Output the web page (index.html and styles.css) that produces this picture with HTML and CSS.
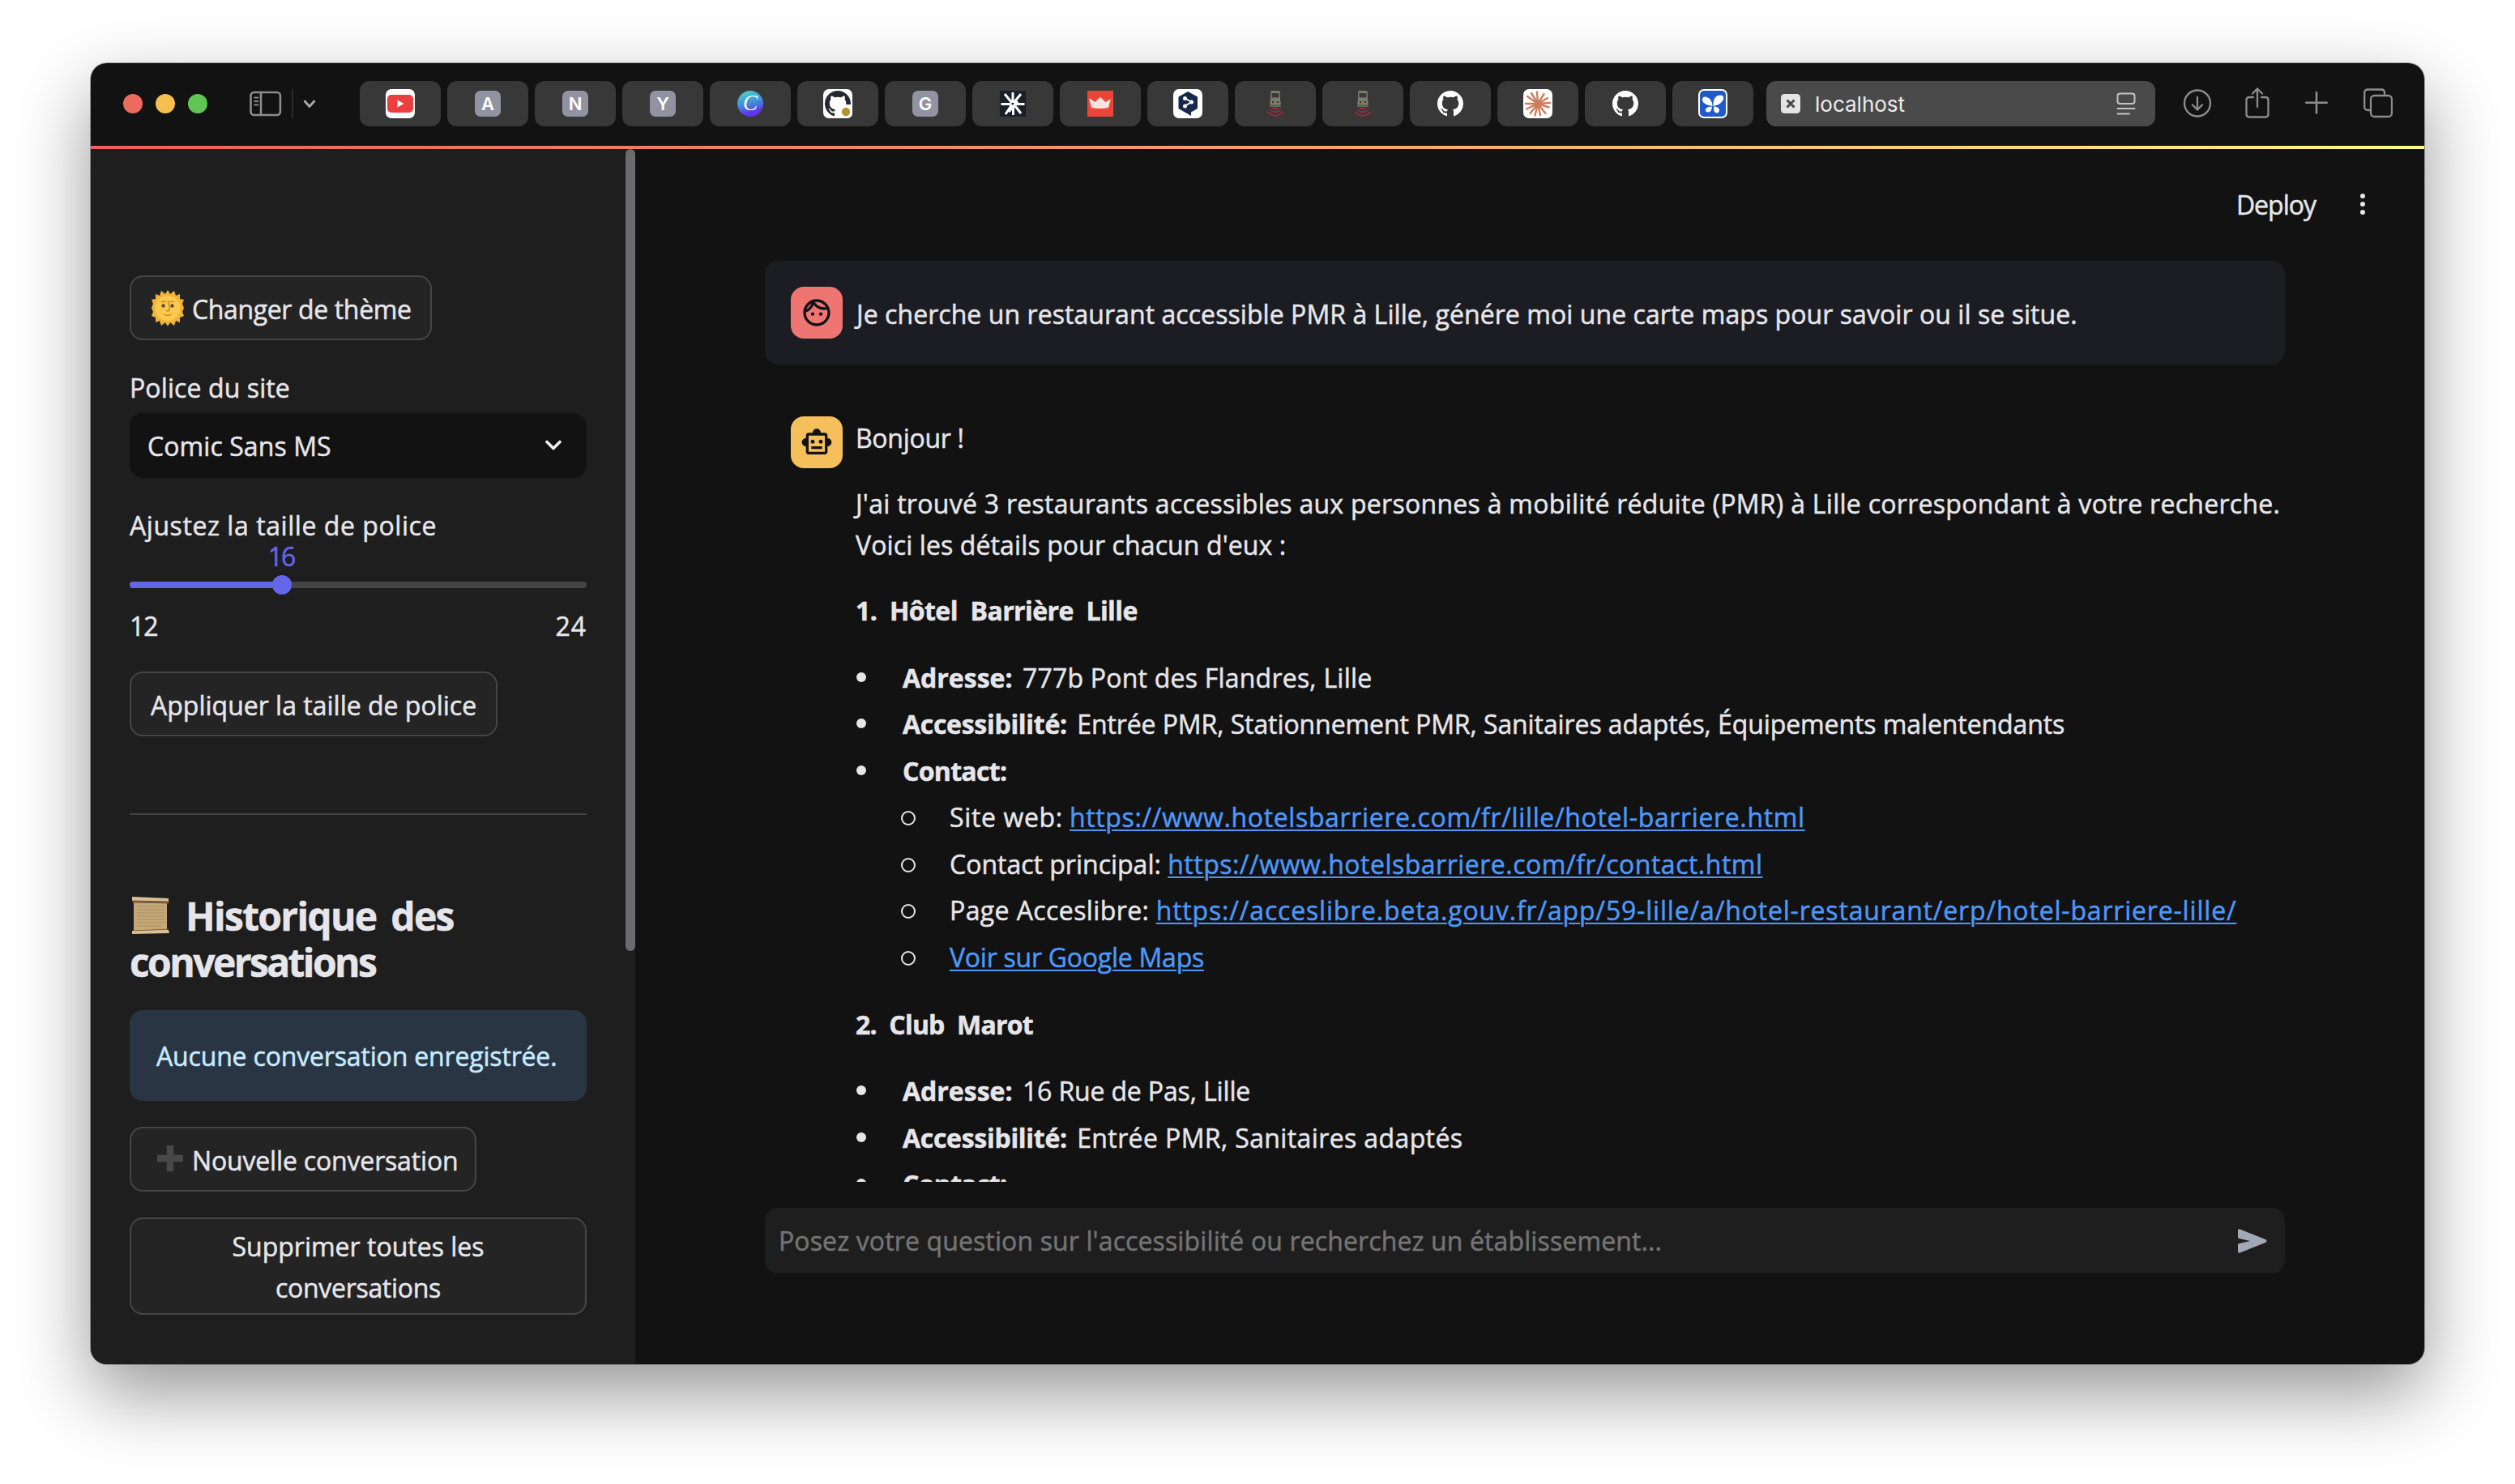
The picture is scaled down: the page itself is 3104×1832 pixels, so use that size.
FILE: index.html
```html
<!DOCTYPE html>
<html lang="fr">
<head>
<meta charset="utf-8">
<title>localhost</title>
<link rel="stylesheet" href="styles.css">
</head>
<body>
<svg class="defs" aria-hidden="true">
  <symbol id="github" viewBox="0 0 16 16"><path d="M8 0C3.58 0 0 3.58 0 8c0 3.54 2.29 6.53 5.47 7.59.4.07.55-.17.55-.38 0-.19-.01-.82-.01-1.49-2.01.37-2.53-.49-2.69-.94-.09-.23-.48-.94-.82-1.13-.28-.15-.68-.52-.01-.53.63-.01 1.08.58 1.23.82.72 1.21 1.87.87 2.33.66.07-.52.28-.87.51-1.07-1.78-.2-3.64-.89-3.64-3.95 0-.87.31-1.59.82-2.15-.08-.2-.36-1.02.08-2.12 0 0 .67-.21 2.2.82.64-.18 1.32-.27 2-.27s1.36.09 2 .27c1.53-1.04 2.2-.82 2.2-.82.44 1.1.16 1.92.08 2.12.51.56.82 1.27.82 2.15 0 3.07-1.87 3.75-3.65 3.95.29.25.54.73.54 1.48 0 1.07-.01 1.93-.01 2.2 0 .21.15.46.55.38A8.01 8.01 0 0 0 16 8c0-4.42-3.58-8-8-8z"/></symbol>
  <symbol id="train" viewBox="0 0 32 32">
    <path d="M11 0h10l1 3v8l1 6H9l1-6V3z" fill="#7b7c6c"/><path d="M11.500 3h9v5.500h-9z" fill="#3c3c3c"/>
    <path d="M12 13h2v2h-2zM18 13h2v2h-2z" fill="#333"/><path d="M10 17h12M9 19.200h14" stroke="#7b7c6c" stroke-width="1.300"/>
    <path d="M12.500 21q3.500 3 7 0M9.500 23.500q6.500 6 13 0M6.500 26q9.500 9.500 19 0" fill="none" stroke="#a32a42" stroke-width="1.700"/>
  </symbol>
</svg>

<div class="window">
  <header class="toolbar">
    <div class="lights"><i class="red"></i><i class="yellow"></i><i class="green"></i></div>
    <svg class="panel" viewBox="0 0 40 32" fill="none" stroke="#8d8d8d" stroke-width="2.600" stroke-linecap="round"><rect x="1.500" y="2" width="36.400" height="28" rx="4"/><path d="M14 2v28"/><path d="M6.300 8.500h4M6.300 13h4M6.300 17.500h4" stroke-width="2"/></svg>
    <span class="divider"></span>
    <svg class="caret" viewBox="0 0 16 10" fill="none" stroke="#a9a9a9" stroke-width="2.800" stroke-linecap="round" stroke-linejoin="round"><path d="M2.200 1.500 8 8l5.800-6.500"/></svg>
    <nav class="tabs">
      <span class="tab"><svg class="fav big" viewBox="0 0 36 36"><rect width="36" height="36" rx="7" fill="#fff"/><rect x="2" y="7" width="32" height="22" rx="5" fill="#ea3f3e"/><path d="M14.500 13.500v9l8-4.500z" fill="#fff"/></svg></span>
      <span class="tab"><b class="letter">A</b></span>
      <span class="tab"><b class="letter">N</b></span>
      <span class="tab"><b class="letter">Y</b></span>
      <span class="tab"><b class="letter canva">C</b></span>
      <span class="tab"><svg class="fav big" viewBox="0 0 36 36"><rect width="36" height="36" rx="7" fill="#fff"/><use href="#github" x="2" y="2" width="32" height="32" fill="#24292f"/><path d="M18 36V27l4-8h14v10q0 7-7 7z" fill="#fff"/><circle cx="28" cy="28" r="5.200" fill="#b8932f"/></svg></span>
      <span class="tab"><b class="letter">G</b></span>
      <span class="tab"><svg class="fav" viewBox="0 0 32 32"><path fill="#1a2029" d="M0 0h32v32H0z"/><path d="M16 2v13M6 4l9 11M26 4l-9 11M1.500 16.500H14M18 16.500h12.500M7 29l8-12M26 28l-7-9M16.500 20v10M11 26 22 13" stroke="#fff" stroke-width="3"/></svg></span>
      <span class="tab"><svg class="fav" viewBox="0 0 32 32"><path fill="#eb4538" d="M0 0h32v32H0z"/><path fill="#fff" d="M5 21 2 9l7.500 5L16 8l6.500 6L29 10l-3 11q-10 2-21 0z" opacity=".85"/></svg></span>
      <span class="tab"><svg class="fav big" viewBox="0 0 36 36"><rect width="36" height="36" rx="7" fill="#fff"/><path d="M18 3 30 9.500v14.500L22 28.500V33l-6-3.500L6.500 24V9.500z" fill="#17294a"/><path d="M14 11l8.500 5L14 21" fill="none" stroke="#fff" stroke-width="1.800"/><g fill="#fff"><circle cx="14.500" cy="11.500" r="2.500"/><circle cx="22.500" cy="16" r="2.500"/><circle cx="14.500" cy="21" r="2.500"/></g></svg></span>
      <span class="tab"><svg class="fav"><use href="#train"/></svg></span>
      <span class="tab"><svg class="fav"><use href="#train"/></svg></span>
      <span class="tab"><svg class="fav" fill="#fff"><use href="#github"/></svg></span>
      <span class="tab"><svg class="fav big" viewBox="0 0 36 36"><rect width="36" height="36" rx="7" fill="#fff"/><path d="M18 18 17 3.500M18 18l7.500-12M18 18l12-7M18 18l15-1M18 18l13.500 4.500M18 18l9.500 12M18 18l3 14M18 18l-3.500 14.500M18 18 8.500 30M18 18 4 24.500M18 18 3 18M18 18 5 9M18 18 10 5" stroke="#cd7c5c" stroke-width="2.400" stroke-linecap="round"/></svg></span>
      <span class="tab"><svg class="fav" fill="#fff"><use href="#github"/></svg></span>
      <span class="tab"><svg class="fav big" viewBox="0 0 36 36"><rect width="36" height="36" rx="7" fill="#fff"/><rect x="2" y="2" width="32" height="32" rx="5" fill="#2158cc"/><path fill="#fff" d="M17.500 21Q5 19 5 13q0-4 4-3.500Q17 11 17.500 21zM18.500 21Q18 8 27 7.500q5 0 4 5Q29 19 18.500 21zM17 21.500q-1 8-5.500 7t-1.500-5q2-2 7-2zM19 21.500q6 0 7 4 0 4-3.500 4-4-.5-3.500-8z"/></svg></span>
    </nav>
    <div class="address">
      <svg class="site" viewBox="0 0 24 24"><rect width="24" height="24" rx="4.500" fill="#e4e4e4"/><path d="M7.500 7.500l9 9M16.500 7.500l-9 9" stroke="#4a4a4a" stroke-width="3"/></svg>
      <span class="host">localhost</span>
      <svg class="reader" viewBox="0 0 24 28" fill="none" stroke="#c4c4c4" stroke-width="2" stroke-linecap="round"><rect x="1.500" y="1.500" width="21" height="12.500" rx="3"/><path d="M1.500 20h21M1.500 26.500h14.500"/></svg>
    </div>
    <svg class="act" viewBox="0 0 36 40" fill="none" stroke="#8d8d8d" stroke-width="2.300" stroke-linecap="round" stroke-linejoin="round"><circle cx="18" cy="19.500" r="16"/><path d="M18 12v15M12 21.500l6 6 6-6"/></svg>
    <svg class="act share" viewBox="0 0 36 40" fill="none" stroke="#8d8d8d" stroke-width="2.300" stroke-linecap="round" stroke-linejoin="round"><path d="M13 12H8q-3.500 0-3.500 3.500v17.500Q4.500 36.500 8 36.500h20q3.500 0 3.500-3.500V15.500Q31.500 12 28 12h-5M18 24V1.500M12 7.500l6-6 6 6"/></svg>
    <svg class="act plus" viewBox="0 0 36 40" fill="none" stroke="#8d8d8d" stroke-width="2.600" stroke-linecap="round"><path d="M18 6v25.500M5.200 18.700h25.500"/></svg>
    <svg class="act stack" viewBox="0 0 36 40" fill="none" stroke="#8d8d8d" stroke-width="2.300"><path d="M9 28H5.500Q1.200 28 1.200 24V6.500Q1.200 2.500 5.500 2.500H22q4 0 4 4V10"/><rect x="9" y="10" width="26" height="26" rx="4.500"/></svg>
  </header>

  <div class="app">
    <aside class="sidebar">
      <div class="side-content">
        <button class="btn theme"><svg class="sun" viewBox="0 0 40 44"><path d="M20 0l3 5 5-4 2 6 5-2 0 6 5 1-2 5 2 5-2 5 2 5-5 2 0 6-5-2-2 6-5-4-3 5-3-5-5 4-2-6-5 2 0-6-5-2 2-5-2-5 2-5-2-5 5-1 0-6 5 2 2-6 5 4z" fill="#f2b33a"/><circle cx="20" cy="22.500" r="15.500" fill="#fbc94c"/><path d="M20 13q3 8 2 12-2 2-4 0M12 15q3-2 5.500 0M22.500 15q3-2 5.500 0M15.500 30q4.500 3 9 0" fill="none" stroke="#c98a25" stroke-width="1.500"/><circle cx="14.500" cy="19.500" r="2.200" fill="#54503a"/><circle cx="25.500" cy="19.500" r="2.200" fill="#54503a"/></svg><span class="t-theme">Changer de thème</span></button>

        <label class="label t-font">Police du site</label>
        <div class="select"><span class="t-comic">Comic Sans MS</span><svg class="down" viewBox="0 0 20 13" fill="none" stroke="#f0f0f0" stroke-width="3.600" stroke-linecap="round" stroke-linejoin="round"><path d="M2 2.500l8 8 8-8"/></svg></div>

        <label class="label size-label t-size">Ajustez la taille de police</label>
        <div class="slider">
          <div class="value-row"><span class="value">16</span></div>
          <div class="track"><span class="fill"></span><span class="thumb"></span></div>
          <div class="ticks"><span class="min">12</span><span class="max">24</span></div>
        </div>
        <button class="btn">Appliquer la taille de police</button>
        <hr>
        <h2><svg class="scroll" viewBox="0 0 48 48"><path d="M3 4h41v40H3z" fill="#c6a878"/><path d="M1 1l45 2v4L1 6zM1 43l45-1 1 4-46 1z" fill="#dcc094"/><path d="M1 6l45 1v2L3 8zM3 43l43-2" fill="#6e5636" stroke="#7a6140"/><path d="M7 13h34M7 17h34M7 21h34M7 25h34M7 29h34M7 33h34M7 37h30" stroke="#a98d60" stroke-width="1.200"/></svg><span class="t-hist">Historique des</span><br><span class="t-conv-h">conversations</span></h2>
        <div class="alert t-none">Aucune conversation enregistrée.</div>
        <button class="btn new"><svg class="add" viewBox="0 0 30 30"><path d="M11 0h8v11h11v8H19v11h-8V19H0v-8h11z" fill="#484848"/></svg><span class="t-new">Nouvelle conversation</span></button>
        <button class="btn wide"><span>Supprimer toutes les</span><span class="t-conv">conversations</span></button>
      </div>
      <div class="scrollbar"></div>
    </aside>

    <main class="main">
      <div class="topbar"><span class="deploy">Deploy</span><span class="kebab"><i></i><i></i><i></i></span></div>
      <div class="thread">
        <section class="msg user">
          <div class="avatar"><svg viewBox="0 0 24 24"><path d="M10.250 13c0 .69-.56 1.250-1.250 1.250S7.750 13.690 7.750 13s.56-1.250 1.250-1.250 1.250.56 1.250 1.250zM15 11.750c-.69 0-1.250.56-1.250 1.250s.56 1.250 1.250 1.250 1.250-.56 1.250-1.250-.56-1.250-1.250-1.250zm7 .25c0 5.520-4.480 10-10 10S2 17.520 2 12 6.480 2 12 2s10 4.480 10 10zM10.660 4.120C12.060 6.440 14.600 8 17.500 8c.46 0 .91-.05 1.340-.12C17.440 5.560 14.900 4 12 4c-.46 0-.91.05-1.340.12zM4.420 9.470c1.710-.97 3.030-2.550 3.660-4.440C6.370 6 5.050 7.580 4.420 9.470zM20 12c0-.78-.12-1.530-.33-2.240-.7.150-1.420.24-2.170.24-3.130 0-5.920-1.440-7.760-3.690C8.690 8.870 6.600 10.880 4 11.860c.01.04 0 .09 0 .14 0 4.410 3.590 8 8 8s8-3.590 8-8z"/></svg></div>
          <p class="t-query">Je cherche un restaurant accessible PMR à Lille, génére moi une carte maps pour savoir ou il se situe.</p>
        </section>
        <section class="msg bot">
          <div class="avatar"><svg viewBox="0 0 24 24"><path d="M20 9V7c0-1.100-.9-2-2-2h-3c0-1.660-1.340-3-3-3S9 3.340 9 5H6c-1.100 0-2 .9-2 2v2c-1.660 0-3 1.340-3 3s1.340 3 3 3v4c0 1.100.9 2 2 2h12c1.100 0 2-.9 2-2v-4c1.660 0 3-1.340 3-3s-1.340-3-3-3zm-2 10H6V7h12v12zm-9-6c-.83 0-1.500-.67-1.500-1.500S8.170 10 9 10s1.500.67 1.500 1.500S9.830 13 9 13zm7.500-1.500c0 .83-.67 1.500-1.500 1.500s-1.500-.67-1.500-1.500.67-1.500 1.500-1.500 1.500.67 1.500 1.500zM8 15h8v2H8v-2z"/></svg></div>
          <div class="prose">
            <p class="t-hello">Bonjour !</p>
            <p><span class="t-found">J'ai trouvé 3 restaurants accessibles aux personnes à mobilité réduite (PMR) à Lille correspondant à votre recherche.</span><br><span class="t-details">Voici les détails pour chacun d'eux :</span></p>
            <p><strong class="t-place">1. Hôtel Barrière Lille</strong></p>
            <ul>
              <li><div><strong>Adresse:</strong> <span class="t-777">777b Pont des Flandres, Lille</span></div></li>
              <li><div><strong class="t-acc">Accessibilité:</strong> <span class="t-entry">Entrée PMR, Stationnement PMR, Sanitaires adaptés, Équipements malentendants</span></div></li>
              <li><div><strong class="t-contact">Contact:</strong>
                <ul class="inner">
                  <li><div><span class="t-web">Site web:</span> <a href="#" class="t-web">https://www.hotelsbarriere.com/fr/lille/hotel-barriere.html</a></div></li>
                  <li><div><span>Contact principal:</span> <a href="#" class="t-page">https://www.hotelsbarriere.com/fr/contact.html</a></div></li>
                  <li><div><span class="t-acceslibre">Page Acceslibre:</span> <a href="#" class="t-long">https://acceslibre.beta.gouv.fr/app/59-lille/a/hotel-restaurant/erp/hotel-barriere-lille/</a></div></li>
                  <li><div><a href="#" class="t-maps">Voir sur Google Maps</a></div></li>
                </ul></div></li>
            </ul>
            <p><strong class="t-place club">2. Club Marot</strong></p>
            <ul>
              <li><div><strong>Adresse:</strong> <span class="t-rue">16 Rue de Pas, Lille</span></div></li>
              <li><div><strong class="t-acc">Accessibilité:</strong> <span class="t-short">Entrée PMR, Sanitaires adaptés</span></div></li>
              <li><div><strong class="t-contact">Contact:</strong></div></li>
            </ul>
          </div>
        </section>
      </div>
      <div class="composer"><span class="t-ask">Posez votre question sur l'accessibilité ou recherchez un établissement...</span><svg class="send" viewBox="0 0 36 30"><path d="M0 2Q0-.5 2.500.5L34 13q3 2 0 4L2.500 29.500Q0 30.500 0 28v-8.500q0-1 1-1.300L15 15 1 11.800q-1-.3-1-1.300z" fill="#a3a8b8"/></svg></div>
    </main>
  </div>
</div>
</body>
</html>
```
FILE: styles.css
```css
* { box-sizing: border-box; }
body {
  margin: 0;
  width: 3104px;
  height: 1832px;
  overflow: hidden;
  padding: 78px 112px;
  background: #fff;
  color: #e6e6ea;
  font: 400 32px/51px "Open Sans", "Noto Sans", sans-serif;
}
.defs { position: absolute; width: 0; height: 0; }
.window {
  width: 2880px;
  height: 1606px;
  border-radius: 20px;
  overflow: hidden;
  background: #121212;
  box-shadow: 0 0 0 1px rgba(0,0,0,.3), 0 36px 92px rgba(0,0,0,.42);
}

/* browser toolbar */
.toolbar { display: flex; align-items: center; height: 102px; padding: 0 36px 2px 40px; }
.lights { display: flex; gap: 16px; margin-right: 52px; }
.lights i { width: 24px; height: 24px; border-radius: 50%; }
.red { background: #ec6a5e; }
.yellow { background: #f5bf4f; }
.green { background: #61c554; }
.panel { width: 40px; height: 32px; }
.divider { width: 2px; height: 36px; margin: 0 12px 0 12px; background: #2b2b2b; }
.caret { width: 16px; height: 11px; margin-right: 54px; }
.tabs { display: flex; gap: 8px; margin-right: 16px; }
.tab { display: flex; align-items: center; justify-content: center; width: 100px; height: 56px; border-radius: 12px; background: #383838; }
.fav { width: 32px; height: 32px; }
.fav.big { width: 36px; height: 36px; }
.letter { width: 32px; height: 32px; border-radius: 7px; background: #9293a0; color: #fff; font: 600 22px/32px Inter, sans-serif; text-align: center; }
.canva { border-radius: 50%; background: linear-gradient(165deg, #4fd0c4 5%, #3f95d8 45%, #5a35ee 80%, #7d2ae8); font: italic 400 27px/30px "Liberation Serif", serif; }
.address { display: flex; align-items: center; width: 480px; height: 56px; padding: 0 24px 0 18px; border-radius: 12px; background: #4a4a4a; margin-right: 34px; }
.site { width: 24px; height: 24px; margin-right: 18px; }
.host { flex: 1; padding-top: 2px; font: 400 26px/32px Inter, sans-serif; color: #ececec; }
.reader { width: 24px; height: 28px; }
.act { width: 36px; height: 40px; }
.share { margin-left: 38px; }
.plus { margin-left: 37px; }
.stack { margin-left: 40px; }

.app {
  display: flex; height: 1504px;
  border-top: 4px solid;
  border-image: linear-gradient(90deg, #ef5f5c, #f28a66 35%, #f9b26f 62%, #fdfb86) 1;
  -webkit-text-stroke: .5px currentColor;
}

/* sidebar */
.sidebar { display: flex; justify-content: space-between; width: 672px; background: #1e1e1e; }
.side-content { width: 612px; padding: 156px 0 0 48px; display: flex; flex-direction: column; align-items: flex-start; }
.scrollbar { width: 12px; height: 990px; border-radius: 6px; background: #6c6c6e; }
.btn {
  display: flex; align-items: center; justify-content: center; flex: none;
  height: 80px; padding: 2px 24px 0; border: 2px solid #464646; border-radius: 16px;
  background: #242424; color: inherit; font: inherit; white-space: nowrap;
}
.theme { width: 373px; justify-content: flex-start; padding: 2px 0 0 25px; }
.sun { flex: none; width: 40px; height: 44px; margin: -2px 10px 0 0; }
.label { display: block; margin-top: 33px; white-space: nowrap; }
.select { display: flex; align-items: center; justify-content: space-between; width: 564px; height: 80px; margin-top: 6px; padding: 0 31px 0 22px; border-radius: 16px; background: #121212; }
.down { width: 20px; height: 13px; margin-top: -2px; }
.size-label { margin-top: 33px; }
.slider { width: 564px; height: 155px; }
.value-row { width: 374px; height: 44px; line-height: 25px; text-align: center; }
.value { color: #6466e9; letter-spacing: -2px; }
.track { display: flex; align-items: center; height: 8px; border-radius: 4px; background: #444; }
.fill { width: 188px; height: 8px; border-radius: 4px; background: #6466e9; }
.thumb { width: 24px; height: 24px; margin-left: -12px; border-radius: 50%; background: #6466e9; flex: none; }
.ticks { display: flex; justify-content: space-between; margin-top: 21px; }
.min { letter-spacing: -1px; }
.max { letter-spacing: 1px; }
hr { width: 564px; height: 2px; margin: 95px 0 0; border: 0; background: #434343; }
h2 { margin: 97px 0 0; font-size: 48px; line-height: 56.5px; font-weight: 700; white-space: nowrap; }
.scroll { width: 48px; height: 48px; margin: 0 19px 0 2px; vertical-align: -5px; }
.alert { width: 564px; height: 112px; margin-top: 31px; padding: 31px 33px; border-radius: 16px; background: #2a3544; color: #c7ebff; white-space: nowrap; }
.new { width: 428px; margin-top: 32px; justify-content: flex-start; padding: 2px 0 0 31px; }
.add { flex: none; width: 34px; height: 32px; margin: -4px 10px 0 0; }
.wide { width: 564px; height: 120px; margin-top: 32px; flex-direction: column; line-height: 51px; }

/* main column */
.main { display: flex; flex-direction: column; flex: 1; padding-left: 160px; }
.topbar { display: flex; align-items: center; justify-content: flex-end; height: 138px; padding: 0 73px 2px 0; }
.deploy { letter-spacing: -1px; margin-right: 55px; }
.kebab { display: flex; flex-direction: column; gap: 4px; }
.kebab i { width: 6px; height: 6px; border-radius: 50%; background: #e6e6ea; }
.thread { width: 1876px; height: 1137px; overflow: hidden; flex: none; }
.msg { display: flex; gap: 16px; padding: 32px; }
.msg p { margin: 0; white-space: nowrap; }
.user { height: 128px; border-radius: 16px; background: #1c1d22; }
.user p { padding: 8px 0 0 1px; }
.avatar { display: flex; align-items: center; justify-content: center; flex: none; width: 64px; height: 64px; border-radius: 16px; background: #ee7572; }
.avatar svg { width: 40px; height: 40px; fill: #121216; }
.bot { margin-top: 32px; }
.bot .avatar { background: #f5bf5c; }
.prose { padding-top: 1.5px; line-height: 50.5px; white-space: nowrap; }
.prose > p { margin-bottom: 31px; }
.prose ul { margin: -2.5px 0 29px; padding: 0; list-style: none; }
.prose li { display: flex; padding: 3.5px 0; }
.prose .inner { margin: 3.5px 0 -3.5px; }
.prose li::before { content: ""; flex: none; width: 12px; height: 12px; margin: 18px 45px 0 1px; border-radius: 50%; background: #e6e6ea; }
.prose .inner li::before { width: 14px; height: 14px; margin: 17px 42px 0 -2px; border: 2px solid #e6e6ea; background: none; }
strong { font-weight: 700; }
li strong { margin-right: 4px; }
a { color: #4d98f9; text-decoration-thickness: 2px; text-underline-offset: 3px; }
.composer { display: flex; align-items: center; justify-content: space-between; width: 1876px; height: 81px; margin-top: 32px; padding: 0 22px 0 17px; border-radius: 16px; background: #1e1e1e; color: #747474; }
.send { width: 36px; height: 30px; }

/* tracking per label */
.t-theme { letter-spacing: -.36px; }
.t-font { letter-spacing: .1px; }
.t-comic { letter-spacing: .08px; }
.t-size { letter-spacing: .56px; }
.t-none, .t-new { letter-spacing: -.17px; }
.t-conv { letter-spacing: -.3px; }
.t-hist { letter-spacing: -1.7px; word-spacing: 7px; }
.t-conv-h { letter-spacing: -2.58px; }
.t-query { letter-spacing: .06px; }
.t-hello { letter-spacing: -.3px; }
.t-found { letter-spacing: .28px; }
.t-details { letter-spacing: .11px; }
.t-place { letter-spacing: -.6px; word-spacing: 8px; }
.club { letter-spacing: -.8px; }
.t-777 { letter-spacing: .22px; }
.t-acc { letter-spacing: -.29px; }
.t-entry { letter-spacing: -.09px; }
.t-contact { letter-spacing: -.69px; }
.t-web { letter-spacing: .63px; }
.t-page { letter-spacing: .5px; }
.t-acceslibre { letter-spacing: .4px; }
.t-long { letter-spacing: .81px; }
.t-maps { letter-spacing: -.25px; }
.t-rue { letter-spacing: -.15px; }
.t-short { letter-spacing: .38px; }
.t-ask { letter-spacing: .12px; }
```
